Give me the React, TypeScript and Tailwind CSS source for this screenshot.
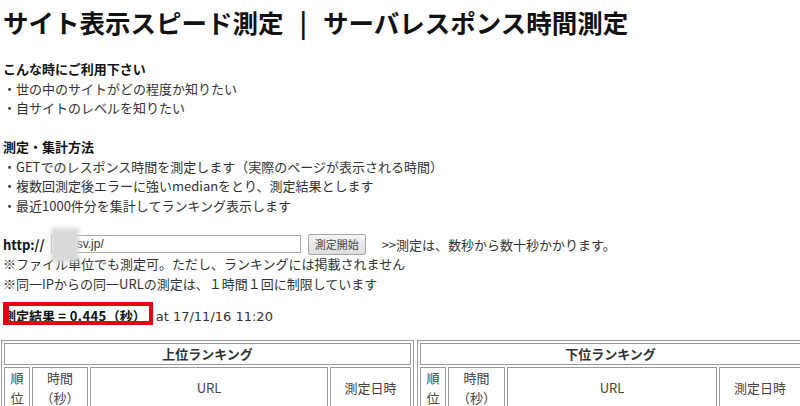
const leftCols = [
  { w: "w-[26px]", label: ["順", "位"] },
  { w: "w-[56px]", label: ["時間", "（秒）"] },
  { w: "w-[238px]", label: ["URL"] },
  { w: "w-[81px]", label: ["測定日時"] },
]

const rightCols = [
  { w: "w-[26px]", label: ["順", "位"] },
  { w: "w-[57px]", label: ["時間", "（秒）"] },
  { w: "w-[210px]", label: ["URL"] },
  { w: "w-[82px]", label: ["測定日時"] },
]

function RankingTable({ title, cols, width }: { title: string; cols: typeof leftCols; width: string }) {
  return (
    <table className={`${width} shrink-0 table-fixed border border-[#9a9a9a] border-separate border-spacing-[2px]`}>
      <colgroup>
        {cols.map((c, i) => (
          <col key={i} className={c.w} />
        ))}
      </colgroup>
      <thead>
        <tr>
          <th colSpan={4} className="h-[22px] border border-[#9a9a9a] p-0 text-center text-[13px] font-bold text-[#333]">
            {title}
          </th>
        </tr>
        <tr>
          {cols.map((c, i) => (
            <th
              key={i}
              className="border border-[#9a9a9a] p-0 align-middle text-center text-[13px] font-normal leading-[20px] text-[#444]"
            >
              {c.label.map((l, j) => (
                <div key={j}>{l}</div>
              ))}
            </th>
          ))}
        </tr>
      </thead>
    </table>
  )
}

export default function App() {
  return (
    <div className="w-[800px] h-[406px] overflow-hidden bg-white font-['Noto_Sans_CJK_JP','Liberation_Sans',sans-serif] text-[13px] text-[#333]">
      <div className="pl-[3px]">
        <h1 className="mt-[7px] text-[25.5px] font-bold leading-[30px] text-[#111] whitespace-nowrap">
          サイト表示スピード測定<span className="mx-[16px]">|</span>サーバレスポンス時間測定
        </h1>

        <div className="mt-[22px] leading-[19.5px]">
          <p className="font-bold text-[#111]">こんな時にご利用下さい</p>
          <p>・世の中のサイトがどの程度か知りたい</p>
          <p>・自サイトのレベルを知りたい</p>
        </div>

        <div className="mt-[19.5px] leading-[19.5px]">
          <p className="font-bold text-[#111]">測定・集計方法</p>
          <p>・GETでのレスポンス時間を測定します（実際のページが表示される時間）</p>
          <p>・複数回測定後エラーに強いmedianをとり、測定結果とします</p>
          <p>・最近1000件分を集計してランキング表示します</p>
        </div>

        <div className="mt-[19.5px] leading-[19.5px]">
          <div className="relative flex h-[19.5px] items-center whitespace-nowrap">
            <span className="font-bold text-[#111]">http://</span>
            <input
              readOnly
              value="sv.jp/"
              className="ml-[6px] h-[18px] w-[250px] border border-[#aaa] bg-white pl-[25px] text-[12px] text-[#333] outline-none font-['Liberation_Sans',sans-serif]"
            />
            <button className="ml-[7px] h-[21px] w-[58px] rounded-[2px] border border-[#a8a8a8] bg-gradient-to-b from-[#f4f4f4] to-[#dedede] text-[11px] text-[#444]">
              測定開始
            </button>
            <span className="ml-[16px]">&gt;&gt;測定は、数秒から数十秒かかります。</span>
            <div className="absolute left-[48px] top-[-7px] h-[34px] w-[28px] bg-[#d9d9d9] blur-[2px]" />
          </div>
          <p>※ファイル単位でも測定可。ただし、ランキングには掲載されません</p>
          <p>※同一IPからの同一URLの測定は、１時間１回に制限しています</p>
        </div>

        <div className="relative mt-[13px] leading-[20px] whitespace-nowrap">
          <span className="font-bold text-[#111]">
            測定結果<span className="tracking-[0.4px]"> = 0.445</span>（秒）
          </span>
          <span className="ml-[10px] font-['DejaVu_Sans','Noto_Sans_CJK_JP',sans-serif]">at 17/11/16 11:20</span>
          <div className="absolute left-0 top-[-4px] h-[23px] w-[150px] border-[4px] border-l-[6px] border-[#e50012]" />
        </div>
      </div>

      <div className="mt-[13px] ml-[1px] flex gap-[3px]">
        <RankingTable title="上位ランキング" cols={leftCols} width="w-[413px]" />
        <RankingTable title="下位ランキング" cols={rightCols} width="w-[387px]" />
      </div>
    </div>
  )
}
